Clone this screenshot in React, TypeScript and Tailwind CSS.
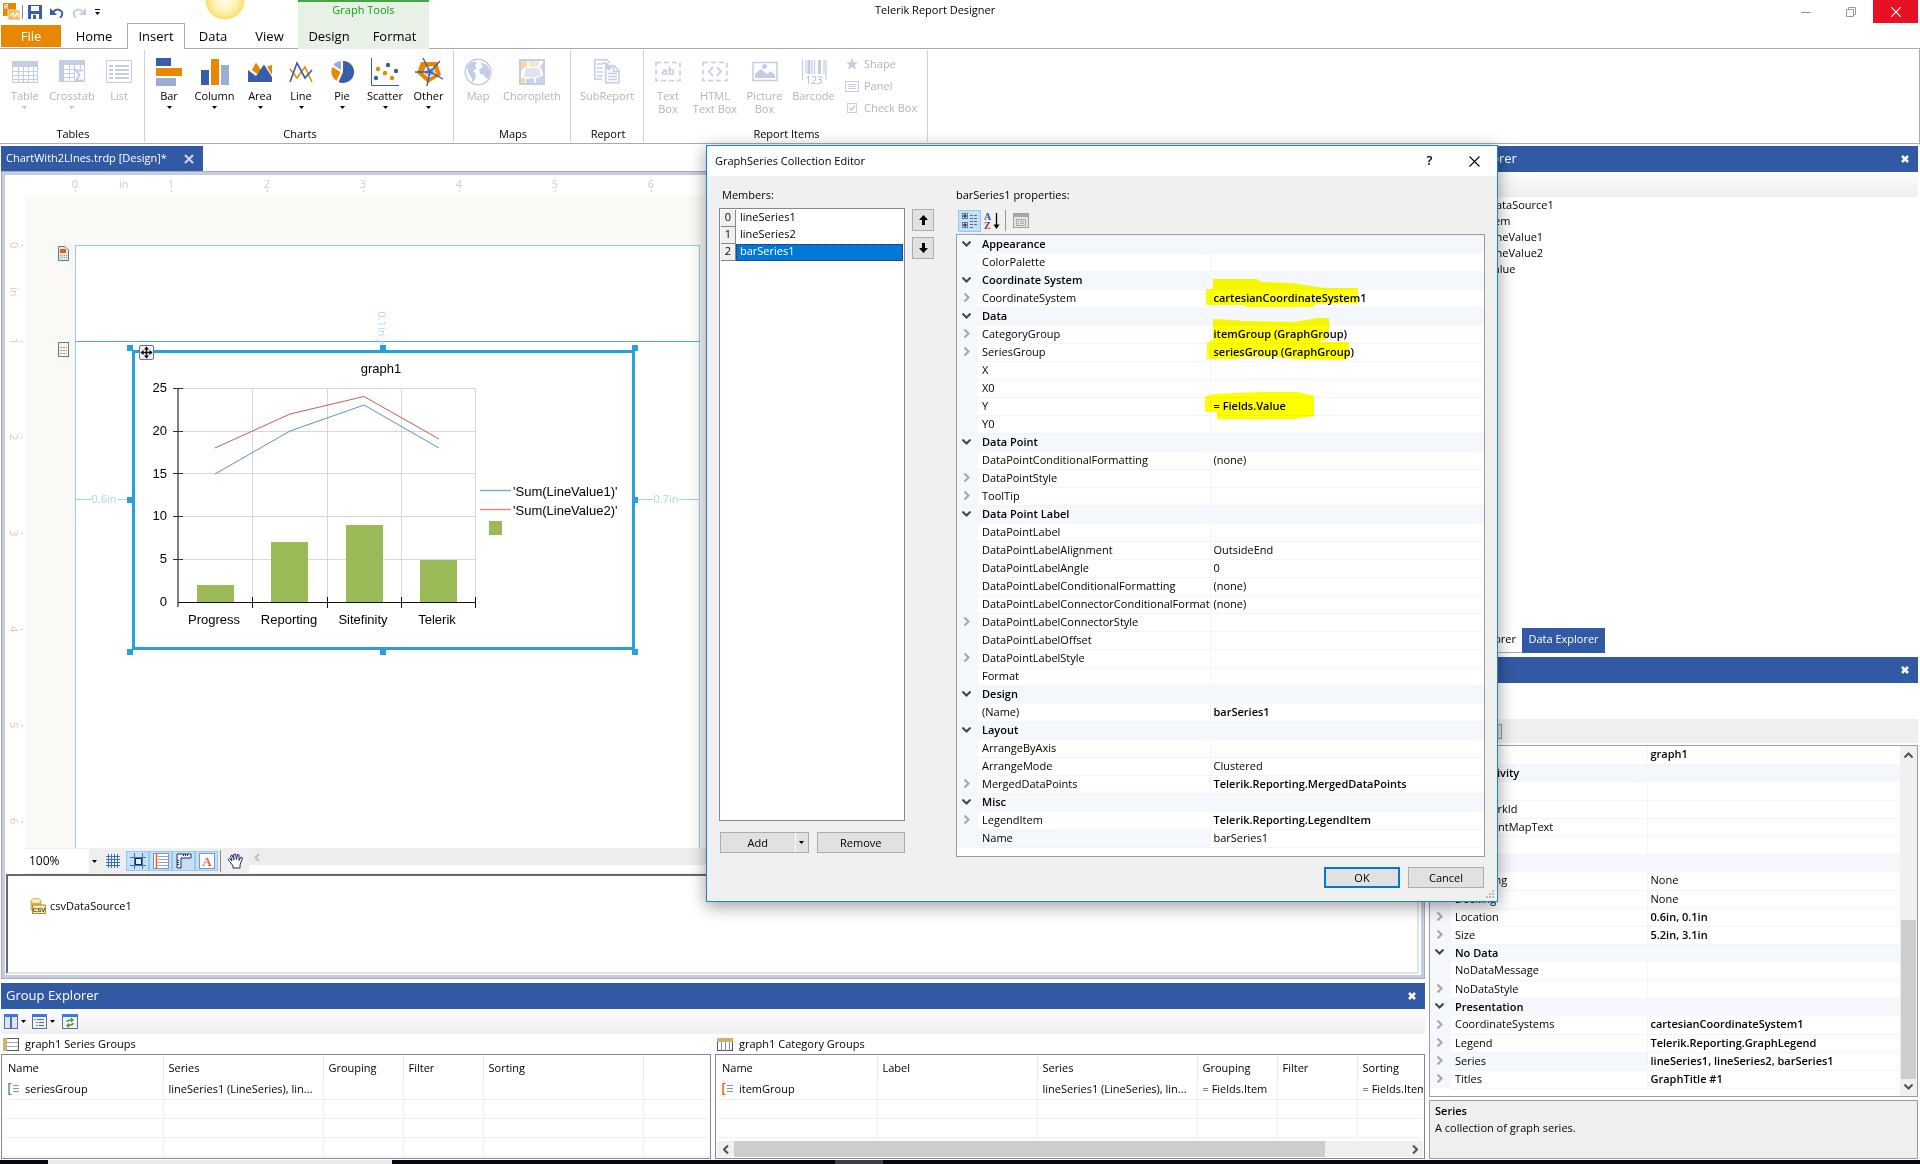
import React, { useState } from "react";
import type { ReactNode } from "react";

type IconProps = { w?: number; h?: number; children: ReactNode };

function Svg({ w = 26, h = 28, children }: IconProps) {
  return (
    <svg width={w} height={h} viewBox={`0 0 ${w} ${h}`} aria-hidden="true" className="shrink-0">
      {children}
    </svg>
  );
}

const BLUE = "#3a5dab";
const ORANGE = "#ea8700";
const PALE = "#9badd6";
const FADE = "#c3cde6";

/* ---------- ribbon icons ---------- */

const TableIcon = () => (
  <Svg>
    <rect x="0.5" y="3.5" width="25" height="21" fill="#fff" stroke={FADE} />
    <rect x="0" y="3" width="26" height="6" fill={FADE} />
    <path d="M0 13.5H26M0 17.5H26M0 21.5H26M6.5 9V25M11.5 9V25M16.5 9V25M21.5 9V25" stroke={FADE} />
  </Svg>
);
const CrosstabIcon = () => (
  <Svg>
    <rect x="0.5" y="2.5" width="25" height="21" fill="#fff" stroke={FADE} />
    <rect x="0" y="2" width="26" height="5" fill={FADE} />
    <rect x="0" y="2" width="5" height="22" fill={FADE} />
    <path d="M5 11.5H18M5 15.5H15M5 19.5H15M10.5 7V24M15.5 7V24M21.5 7V11" stroke={FADE} />
    <path d="M24 12.5H17L20.5 17L17 22.5H24.5" fill="none" stroke={FADE} strokeWidth="2" />
  </Svg>
);
const ListIcon = () => (
  <Svg>
    <rect x="0.5" y="2.5" width="25" height="22" fill="#fff" stroke={FADE} />
    <path d="M3 8H7M9 8H23M3 12H7M9 12H23M3 16H7M9 16H23M3 20H7M9 20H23" stroke={FADE} strokeWidth="2" />
  </Svg>
);
const BarIcon = () => (
  <Svg>
    <rect y="0" width="15" height="8" fill={BLUE} />
    <rect y="10" width="26" height="8" fill={ORANGE} />
    <rect y="20" width="20" height="8" fill={PALE} />
  </Svg>
);
const ColumnIcon = () => (
  <Svg w={28}>
    <rect x="0" y="12" width="8" height="15" fill={BLUE} />
    <rect x="10" y="1" width="8" height="26" fill={ORANGE} />
    <rect x="20" y="7" width="8" height="20" fill={PALE} />
  </Svg>
);
const AreaIcon = () => (
  <Svg w={24}>
    <path d="M4 12L8 4.5L13 12L9 16Z M19 8.5L24 7V17Z" fill={ORANGE} />
    <path d="M0 24V12L8 18L16 6.5L24 19V24Z" fill={BLUE} />
  </Svg>
);
const LineIcon = () => (
  <Svg w={24}>
    <path d="M1 11L8 20L16 9L23 24" fill="none" stroke={ORANGE} strokeWidth="1.6" />
    <path d="M1 24L8 5L16 20L23 12" fill="none" stroke={BLUE} strokeWidth="1.6" />
  </Svg>
);
const PieIcon = () => (
  <Svg w={24}>
    <path d="M13 3A11 11 0 1 1 8.500 24L13 14Z" fill={BLUE} />
    <path d="M11 3V12L3.500 7A10 10 0 0 1 11 3Z" fill={PALE} />
    <path d="M2.500 9L10.500 14L6.500 23A11 11 0 0 1 2.500 9Z" fill={ORANGE} />
  </Svg>
);
const ScatterIcon = () => (
  <Svg w={28}>
    <path d="M0.500 0V27.500H28" fill="none" stroke={BLUE} />
    <g fill={ORANGE}><circle cx="7" cy="11" r="2.200" /><circle cx="14" cy="15" r="2.200" /><circle cx="21" cy="20" r="2.200" /></g>
    <g fill={BLUE}><circle cx="17" cy="7" r="2.200" /><circle cx="25" cy="13" r="2.200" /><circle cx="5" cy="20" r="2.200" /></g>
  </Svg>
);
const OtherIcon = () => (
  <Svg w={28}>
    <path fillRule="evenodd" d="M6 4L22 4L26 17L13 25L2 15Z M11 9L8 15L14 20L21 16L18 8Z" fill={ORANGE} />
    <path d="M12 11L18 10L20 16L14 18L9 15Z" fill={PALE} />
    <path d="M8 0L15 14L25 3M0 14H15L28 21M15 14L12 28" fill="none" stroke={BLUE} strokeWidth="1.400" />
  </Svg>
);
const MapIcon = () => (
  <Svg w={28}>
    <circle cx="14" cy="14" r="12.800" fill="#fff" stroke={FADE} strokeWidth="1.600" />
    <path d="M3 8L8 4L13 4L11 8L13 10L9 13L12 16L11 21L9 25L7 19L4 14Z M16 4L23 7L26 13L25 19L22 21L20 17L16 16L15 11L19 9Z" fill={FADE} />
  </Svg>
);
const ChoroplethIcon = () => (
  <Svg>
    <rect x="1" y="2" width="24" height="24" fill="#fff" stroke={FADE} strokeWidth="2" />
    <path d="M2 3H8V8L2 13Z M2 20H6V25H2Z" fill="#fad7a5" />
    <path d="M10 3H21L18 9H10Z" fill="#fbe6c8" />
    <path d="M7 10H20L22 18L14 19H5Z" fill="#dfe4f2" />
    <path d="M7 21L15 20V25H7Z M17 20L24 18V25H17Z M21 8L24 5V15Z" fill="#cdd5ea" />
  </Svg>
);
const SubReportIcon = () => (
  <Svg>
    <path d="M8 21H0.800V1.800H13L16 5" fill="#fff" stroke={FADE} strokeWidth="1.500" />
    <path d="M3 6H9M3 10H9M3 14H9M3 18H9" stroke={FADE} strokeWidth="1.500" />
    <path d="M11.800 7.800H20L25 13V24.800H11.800Z" fill="#fff" stroke={FADE} strokeWidth="1.500" />
    <path d="M19.500 8V13.500H25M14 15.500H23M14 18.500H23M14 21.500H23" fill="none" stroke={FADE} strokeWidth="1.500" />
    <path d="M9 5Q15 5 15 11M12 8.500L15 11.500L17.500 8.500" fill="none" stroke={FADE} strokeWidth="1.800" />
  </Svg>
);
const TextBoxIcon = () => (
  <Svg>
    <rect x="1" y="4.500" width="24" height="18" fill="none" stroke={FADE} strokeWidth="1.500" strokeDasharray="5 3" />
    <text x="13" y="17" textAnchor="middle" fontSize="11" fontWeight="700" fill={FADE} fontFamily="Open Sans, sans-serif">ab</text>
  </Svg>
);
const HtmlBoxIcon = () => (
  <Svg>
    <rect x="1" y="4.500" width="24" height="18" fill="none" stroke={FADE} strokeWidth="1.500" strokeDasharray="5 3" />
    <path d="M11 9L7 13.500L11 18M15 9L19 13.500L15 18" fill="none" stroke={FADE} strokeWidth="1.800" />
  </Svg>
);
const PictureIcon = () => (
  <Svg>
    <rect x="1" y="4.500" width="24" height="18" fill="#fff" stroke={FADE} strokeWidth="1.500" />
    <path d="M3 20V16L9 11L15 16L19 13L23 17V20Z" fill={FADE} />
    <circle cx="12.500" cy="8.500" r="2.500" fill={FADE} />
  </Svg>
);
const BarcodeIcon = () => (
  <Svg>
    <path d="M1.500 2V22M25 2V22M5 2V16M11 2V16M13.500 2V16M23 2V16" stroke={FADE} strokeWidth="1.200" />
    <path d="M8 2V16M18.500 2V16" stroke={FADE} strokeWidth="3" />
    <text x="13" y="26" textAnchor="middle" fontSize="10" fill="#aab8db" fontFamily="Open Sans, sans-serif">123</text>
  </Svg>
);
const ShapeIcon = () => (
  <Svg w={14} h={14}>
    <path d="M7 1L8.700 5.300H13L9.600 8L11 12.800L7 10L3 12.800L4.400 8L1 5.300H5.300Z" fill={FADE} />
  </Svg>
);
const PanelIcon = () => (
  <Svg w={14} h={14}>
    <rect x="0.500" y="2.500" width="13" height="10" fill="#fff" stroke={FADE} />
    <path d="M3 5.500H11M3 7.500H11M3 9.500H11" stroke={FADE} />
  </Svg>
);
const CheckIcon = () => (
  <Svg w={14} h={14}>
    <rect x="2.500" y="2.500" width="9" height="9" fill="#fff" stroke={FADE} />
    <path d="M4.500 7L6.500 9L10 4.500" fill="none" stroke={FADE} strokeWidth="1.500" />
  </Svg>
);

const Caret = ({ faded = false }: { faded?: boolean }) => (
  <svg width="5" height="3" viewBox="0 0 5 3" aria-hidden="true" className="shrink-0">
    <path d="M0 0H5L2.500 3Z" fill={faded ? "#c0c0c0" : "#000"} />
  </svg>
);

/* ---------- ribbon ---------- */

function RibbonButton({ icon, label, className, disabled = false, caret = false }: {
  icon: ReactNode; label: string; className: string; disabled?: boolean; caret?: boolean;
}) {
  return (
    <button
      disabled={disabled}
      className={`flex h-[66px] flex-col items-center whitespace-pre-line text-center text-[11px] leading-[13px] ${disabled ? "text-[#b4b4b4]" : "text-black"} ${className}`}
    >
      {icon}
      <span className="mt-[3px]">{label}</span>
      {caret && <span className="mt-1"><Caret faded={disabled} /></span>}
    </button>
  );
}

function RibbonGroup({ title, children, className }: { title: string; children: ReactNode; className: string }) {
  return (
    <section className={`flex flex-col justify-between border-r border-[#d2d2d2] ${className}`}>
      <div className="flex px-1 pt-2">{children}</div>
      <h2 className="pl-0.5 text-center text-[11px] leading-4">{title}</h2>
    </section>
  );
}

function Ribbon() {
  return (
    <div className="flex h-[95px] shrink-0 border-r border-b border-[#ababab] bg-white pt-px pb-px">
      <RibbonGroup title="Tables" className="w-[145px]">
        <RibbonButton icon={<TableIcon />} label="Table" className="w-[42px]" disabled caret />
        <RibbonButton icon={<CrosstabIcon />} label="Crosstab" className="w-[53px]" disabled caret />
        <RibbonButton icon={<ListIcon />} label="List" className="w-[42px]" disabled />
      </RibbonGroup>
      <RibbonGroup title="Charts" className="w-[309px]">
        <RibbonButton icon={<BarIcon />} label="Bar" className="w-10" caret />
        <RibbonButton icon={<ColumnIcon />} label="Column" className="w-[51px]" caret />
        <RibbonButton icon={<AreaIcon />} label="Area" className="w-10" caret />
        <RibbonButton icon={<LineIcon />} label="Line" className="w-[42px]" caret />
        <RibbonButton icon={<PieIcon />} label="Pie" className="w-10" caret />
        <RibbonButton icon={<ScatterIcon />} label="Scatter" className="w-[46px]" caret />
        <RibbonButton icon={<OtherIcon />} label="Other" className="w-[41px]" caret />
      </RibbonGroup>
      <RibbonGroup title="Maps" className="w-[117px]">
        <RibbonButton icon={<MapIcon />} label="Map" className="w-10" disabled />
        <RibbonButton icon={<ChoroplethIcon />} label="Choropleth" className="w-[68px]" disabled />
      </RibbonGroup>
      <RibbonGroup title="Report" className="w-[73px]">
        <RibbonButton icon={<SubReportIcon />} label="SubReport" className="w-16" disabled />
      </RibbonGroup>
      <RibbonGroup title="Report Items" className="w-[284px]">
        <RibbonButton icon={<TextBoxIcon />} label={"Text\nBox"} className="w-10" disabled />
        <RibbonButton icon={<HtmlBoxIcon />} label={"HTML\nText Box"} className="w-[54px]" disabled />
        <RibbonButton icon={<PictureIcon />} label={"Picture\nBox"} className="w-[45px]" disabled />
        <RibbonButton icon={<BarcodeIcon />} label="Barcode" className="w-[53px]" disabled />
        <div className="-mt-px flex flex-col gap-2 pl-[5px] text-[11px] leading-[14px] text-[#b4b4b4]">
          <button disabled className="flex items-center gap-[5px]"><ShapeIcon />Shape</button>
          <button disabled className="flex items-center gap-[5px]"><PanelIcon />Panel</button>
          <button disabled className="flex items-center gap-[5px]"><CheckIcon />Check Box</button>
        </div>
      </RibbonGroup>
    </div>
  );
}

function TitleArea() {
  const plain = "h-[26px] border-b border-[#ababab] text-[13px] leading-[26px]";
  return (
    <header className="flex h-[49px] shrink-0 bg-white">
      <div className="relative flex w-[298px] flex-col">
        <div className="flex h-[23px] items-center pl-[3px]">
          <Svg w={17} h={17}>
            <rect x="0" y="0" width="13" height="13" fill={ORANGE} />
            <path d="M2 6V1.500H4.500V3.500H2M3 3.500L5 6" fill="none" stroke="#fff" />
            <rect x="5" y="7" width="12" height="10" fill="#f7b45c" stroke="#fff" strokeWidth="0.700" />
            <path d="M7 13L10 10L11 14L15 10M12 10H15V14" fill="none" stroke="#fff" strokeWidth="1.200" />
          </Svg>
          <span className="ml-0.5 h-[14px] w-px bg-[#8a8a8a]" />
          <button aria-label="Save" className="ml-[5px]">
            <Svg w={14} h={14}>
              <path d="M0 0H14V14H0Z" fill={BLUE} />
              <rect x="3" y="1" width="8" height="5" fill="#fff" />
              <rect x="3" y="9" width="8" height="5" fill="#fff" />
              <rect x="5" y="10" width="3" height="4" fill={BLUE} />
            </Svg>
          </button>
          <button aria-label="Undo" className="ml-2">
            <Svg w={14} h={12}>
              <path d="M3 6Q8 1 12 6Q13 9 10 12" fill="none" stroke={BLUE} strokeWidth="2" />
              <path d="M0 2V9H7Z" fill={BLUE} />
            </Svg>
          </button>
          <button aria-label="Redo" className="ml-2" disabled>
            <Svg w={14} h={12}>
              <path d="M11 6Q6 1 2 6Q1 9 4 12" fill="none" stroke={FADE} strokeWidth="2" />
              <path d="M14 2V9H7Z" fill={FADE} />
            </Svg>
          </button>
          <button aria-label="Customize toolbar" className="ml-[9px]">
            <Svg w={5} h={6}>
              <path d="M0 0.500H5" stroke="#000" />
              <path d="M0 3H5L2.500 6Z" />
            </Svg>
          </button>
          <svg width="40" height="20" viewBox="0 0 40 20" aria-hidden="true" className="absolute top-0 left-[205px]">
            <defs>
              <radialGradient id="sun"><stop offset="0" stopColor="#fffdf0" /><stop offset="0.600" stopColor="#fff3b4" /><stop offset="1" stopColor="#f9dc68" /></radialGradient>
            </defs>
            <circle cx="20" cy="0" r="19.500" fill="url(#sun)" />
          </svg>
        </div>
        <nav className="flex" aria-label="Ribbon tabs">
          <div className="w-[61px] border-b border-[#ababab] pt-0.5 pl-px">
            <button className="block h-[22px] w-full bg-[#ea8700] text-[13px] leading-[22px] text-white">File</button>
          </div>
          <button className={`${plain} w-[66px]`}>Home</button>
          <button className="h-[26px] w-[58px] border border-b-0 border-[#ababab] text-[13px] leading-[25px]">Insert</button>
          <button className={`${plain} w-[56px]`}>Data</button>
          <button className={`${plain} w-[57px]`}>View</button>
        </nav>
      </div>
      <div className="w-[131px] border-t-2 border-[#47a447] bg-[#e7f1e6]">
        <div className="h-[21px] text-center text-[11px] leading-[15px] text-[#12a012]">Graph Tools</div>
        <div className="flex text-[13px] leading-[26px]">
          <button className="w-[62px]">Design</button>
          <button className="w-[69px]">Format</button>
        </div>
      </div>
      <div className="flex flex-1 items-start justify-between border-b border-[#ababab]">
        <h1 className="pl-[446px] text-[11px] leading-[20px]">Telerik Report Designer</h1>
        <div className="flex pr-0.5">
          <button aria-label="Minimize" className="flex h-[23px] w-[45px] items-center justify-center">
            <Svg w={10} h={10}><path d="M0 5.500H10" stroke="#999" /></Svg>
          </button>
          <button aria-label="Restore" className="flex h-[23px] w-[45px] items-center justify-center">
            <Svg w={10} h={10}><path d="M0.500 2.500H7.500V9.500H0.500ZM2.500 2.500V0.500H9.500V7.500H7.500" fill="none" stroke="#999" /></Svg>
          </button>
          <button aria-label="Close" className="flex h-[23px] w-[45px] items-center justify-center bg-[#e81123]">
            <Svg w={10} h={10}><path d="M0 0L10 10M10 0L0 10" stroke="#fff" strokeWidth="1.200" /></Svg>
          </button>
        </div>
      </div>
    </header>
  );
}

/* ---------- property grid ---------- */

type Prop = { name: string; value?: string; kind?: "cat" | "exp"; bold?: boolean; selected?: boolean };

function PropertyTable({ rows, nameWidth, label }: { rows: Prop[]; nameWidth: string; label: string }) {
  return (
    <table aria-label={label} className="w-full table-fixed border-collapse text-[11px] leading-[16px]">
      <colgroup>
        <col className="w-[21px]" />
        <col className={nameWidth} />
        <col />
      </colgroup>
      <tbody>
        {rows.map((r, i) => (
          <tr key={i} className="h-[18px]">
            <td className="bg-[#f4f7fc] p-0 align-top">
              {r.kind && (
                <button aria-label={`Toggle ${r.name}`} className="flex h-[16px] w-[19px] items-center justify-center">
                  {r.kind === "cat" ? (
                    <Svg w={9} h={6}><path d="M0.500 0.500L4.500 4.500L8.500 0.500" fill="none" stroke="#444" strokeWidth="2" /></Svg>
                  ) : (
                    <Svg w={6} h={9}><path d="M0.500 0.500L4.500 4.500L0.500 8.500" fill="none" stroke="#a6a6a6" strokeWidth="2" /></Svg>
                  )}
                </button>
              )}
            </td>
            {r.kind === "cat" ? (
              <th colSpan={2} scope="rowgroup" className="truncate border-t border-[#eeeeee] bg-[#f4f7fc] p-0 pl-1 text-left align-top font-semibold">{r.name}</th>
            ) : (
              <>
                <td className={`overflow-hidden border-b border-[#f1f4fa] p-0 pl-1 align-top whitespace-nowrap ${r.selected ? "bg-[#f4f7fc]" : "bg-white"}`}>{r.name}</td>
                <td className={`truncate border-b border-l border-[#f1f4fa] bg-white p-0 pl-[3px] align-top ${r.bold ? "font-semibold" : ""}`}>{r.value}</td>
              </>
            )}
          </tr>
        ))}
      </tbody>
    </table>
  );
}

const cat = (name: string): Prop => ({ name, kind: "cat" });

const seriesProps: Prop[] = [
  cat("Appearance"),
  { name: "ColorPalette" },
  cat("Coordinate System"),
  { name: "CoordinateSystem", kind: "exp", value: "cartesianCoordinateSystem1", bold: true },
  cat("Data"),
  { name: "CategoryGroup", kind: "exp", value: "itemGroup (GraphGroup)", bold: true },
  { name: "SeriesGroup", kind: "exp", value: "seriesGroup (GraphGroup)", bold: true },
  { name: "X" },
  { name: "X0" },
  { name: "Y", value: "= Fields.Value", bold: true },
  { name: "Y0" },
  cat("Data Point"),
  { name: "DataPointConditionalFormatting", value: "(none)" },
  { name: "DataPointStyle", kind: "exp" },
  { name: "ToolTip", kind: "exp" },
  cat("Data Point Label"),
  { name: "DataPointLabel" },
  { name: "DataPointLabelAlignment", value: "OutsideEnd" },
  { name: "DataPointLabelAngle", value: "0" },
  { name: "DataPointLabelConditionalFormatting", value: "(none)" },
  { name: "DataPointLabelConnectorConditionalFormatting", value: "(none)" },
  { name: "DataPointLabelConnectorStyle", kind: "exp" },
  { name: "DataPointLabelOffset" },
  { name: "DataPointLabelStyle", kind: "exp" },
  { name: "Format" },
  cat("Design"),
  { name: "(Name)", value: "barSeries1", bold: true },
  cat("Layout"),
  { name: "ArrangeByAxis" },
  { name: "ArrangeMode", value: "Clustered" },
  { name: "MergedDataPoints", kind: "exp", value: "Telerik.Reporting.MergedDataPoints", bold: true },
  cat("Misc"),
  { name: "LegendItem", kind: "exp", value: "Telerik.Reporting.LegendItem", bold: true },
  { name: "Name", value: "barSeries1", selected: true },
];

const graphProps: Prop[] = [
  { name: "(Name)", value: "graph1", bold: true },
  cat("Interactivity"),
  { name: "Action" },
  { name: "BookmarkId" },
  { name: "DocumentMapText" },
  { name: "ToolTip" },
  cat("Layout"),
  { name: "Anchoring", value: "None" },
  { name: "Docking", value: "None" },
  { name: "Location", kind: "exp", value: "0.6in, 0.1in", bold: true },
  { name: "Size", kind: "exp", value: "5.2in, 3.1in", bold: true },
  cat("No Data"),
  { name: "NoDataMessage" },
  { name: "NoDataStyle", kind: "exp" },
  cat("Presentation"),
  { name: "CoordinateSystems", kind: "exp", value: "cartesianCoordinateSystem1", bold: true },
  { name: "Legend", kind: "exp", value: "Telerik.Reporting.GraphLegend", bold: true },
  { name: "Series", kind: "exp", value: "lineSeries1, lineSeries2, barSeries1", bold: true, selected: true },
  { name: "Titles", kind: "exp", value: "GraphTitle #1", bold: true },
];

/* ---------- panels ---------- */

function PanelHeader({ title }: { title: string }) {
  return (
    <div className="flex h-[26px] shrink-0 items-center justify-between bg-[#3259a3] pr-[9px] pl-[5px] text-[13px] text-white">
      <h2>{title}</h2>
      <button aria-label={`Close ${title}`}>
        <Svg w={8} h={8}><path d="M1 1L7 7M7 1L1 7" stroke="#fff" strokeWidth="2.500" /></Svg>
      </button>
    </div>
  );
}

/* Graph item on the design surface, drawn in surface coordinates. */
const bars = [
  { x: 197, top: 585, label: "Progress", cx: 214 },
  { x: 271, top: 542, label: "Reporting", cx: 289 },
  { x: 346, top: 525, label: "Sitefinity", cx: 363 },
  { x: 420, top: 560, label: "Telerik", cx: 437 },
];
const handles = [[127, 345], [380, 345], [632, 345], [127, 497], [632, 497], [127, 649], [380, 649], [632, 649]];

function DesignSurface() {
  return (
    <svg className="block h-full w-full bg-[#faf9f5]" role="img" aria-label="Report design surface">
      <g transform="translate(-25 -195)">
        <rect x="75.500" y="245.500" width="624" height="2000" fill="#fff" stroke="#8fcdea" />
        <path d="M75 341.500H700" stroke="#4fb0e0" />
        <path d="M75 499.500H91M118 499.500H127M638 499.500H653M679 499.500H700M382.500 341V346" stroke="#9bd2ee" />
        <g fill="#a8d8f0" fontSize="11" fontFamily="Open Sans, sans-serif" textAnchor="middle">
          <text x="104" y="503">0.6in</text>
          <text x="666" y="503">0.7in</text>
          <text transform="translate(378 324) rotate(90)">0.1in</text>
        </g>
        <rect x="133.500" y="351.500" width="500" height="297" fill="#fff" stroke="#28a0dc" strokeWidth="3" />
        {handles.map(([x, y]) => <rect key={`${x}-${y}`} x={x} y={y} width="6" height="6" fill="#28a0dc" />)}
        <g stroke="#d8d8d8">
          <path d="M178 388.500H476M178 431.500H476M178 473.500H476M178 516.500H476M178 559.500H476M252.500 388V602M327.500 388V602M401.500 388V602M475.500 388V602" />
        </g>
        {bars.map((b) => <rect key={b.label} x={b.x} y={b.top} width="37" height={602 - b.top} fill="#9bbb59" />)}
        <polyline points="215,474 290,431 364,405 439,448" fill="none" stroke="#5f8fcb" />
        <polyline points="215,448 290,414 364,396.500 439,439" fill="none" stroke="#c95a57" />
        <path d="M178 388V607" stroke="#555" strokeWidth="1.500" />
        <path d="M173 388.500H183M173 431.500H183M173 473.500H183M173 516.500H183M173 559.500H183" stroke="#333" />
        <path d="M178 602.500H476M252.500 597V608M327.500 597V608M401.500 597V608M475.500 597V608" stroke="#111" />
        <g fontFamily="Liberation Sans, sans-serif" fontSize="13" textAnchor="end">
          <text x="167" y="392">25</text><text x="167" y="435">20</text><text x="167" y="478">15</text>
          <text x="167" y="520">10</text><text x="167" y="563">5</text><text x="167" y="606">0</text>
        </g>
        <g fontFamily="Liberation Sans, sans-serif" fontSize="13" textAnchor="middle">
          <text x="381" y="373">graph1</text>
          {bars.map((b) => <text key={b.label} x={b.cx} y="624">{b.label}</text>)}
        </g>
        <path d="M480 490.500H511" stroke="#86a9d6" strokeWidth="1.500" />
        <path d="M480 509.500H511" stroke="#d88c8a" strokeWidth="1.500" />
        <rect x="489" y="521" width="13" height="14" fill="#9bbb59" />
        <g fontFamily="Liberation Sans, sans-serif" fontSize="13">
          <text x="513" y="496">'Sum(LineValue1)'</text>
          <text x="513" y="515">'Sum(LineValue2)'</text>
        </g>
        <rect x="139.500" y="345.500" width="14" height="14" rx="1.500" fill="#eef1fb" stroke="#6f7285" />
        <path d="M146.500 348V358M141.500 352.500H151.500" stroke="#111" strokeWidth="1.400" />
        <path d="M144 349.500L146.500 346.500L149 349.500ZM144 355.500L146.500 358.500L149 355.500ZM143.500 350L140.500 352.500L143.500 355ZM149.500 350L152.500 352.500L149.500 355Z" />
        <g>
          <path d="M58.500 246.500H65L68.500 250V260.500H58.500Z" fill="#dfe7ea" stroke="#52808f" />
          <rect x="60" y="249" width="6" height="4" fill="#f25a00" />
          <path d="M60 255.500H67M60 257.500H67" stroke="#8aa4ae" strokeDasharray="1 1" />
          <rect x="58.500" y="342.500" width="10" height="14" fill="#fbf7f0" stroke="#52808f" />
          <path d="M60 347.500H67M60 350.500H67M60 353.500H67" stroke="#e0843c" strokeDasharray="2 1" />
        </g>
      </g>
    </svg>
  );
}

function DesignerFrame() {
  const tool = "flex h-5 w-[23px] items-center justify-center border border-[#90c8f6] bg-[#c5dff5]";
  return (
    <div className="flex min-h-0 flex-1 flex-col border border-[#ababab] bg-[#c3cde3] p-[3px]">
      <div className="flex min-h-0 flex-1 flex-col bg-white">
        <div className="flex h-5 shrink-0 overflow-hidden pl-[22px] text-[11px] text-[#cfccc4]">
          {[0, 1, 2, 3, 4, 5, 6].map((n) => (
            <div key={n} className="relative flex w-24 shrink-0 flex-col items-center pt-0.5 leading-[13px]">
              {n}
              <span className="h-0.5 w-px bg-[#cfccc4]" />
              {n === 0 && <span className="absolute top-0.5 left-[92px]">in</span>}
            </div>
          ))}
        </div>
        <div className="flex min-h-0 flex-1">
          <div className="flex w-5 shrink-0 flex-col overflow-hidden pt-0.5 text-[11px] text-[#cfccc4]">
            {[0, 1, 2, 3, 4, 5, 6].map((n) => (
              <div key={n} className="relative flex h-24 shrink-0 items-center pl-0.5 leading-[14px]">
                <span className="[writing-mode:vertical-rl]">{n}</span>
                <span className="h-px w-0.5 bg-[#cfccc4]" />
                {n === 0 && <span className="absolute top-[90px] left-0.5 [writing-mode:vertical-rl]">in</span>}
              </div>
            ))}
          </div>
          <div className="min-w-0 flex-1"><DesignSurface /></div>
        </div>
        <div className="flex h-[26px] shrink-0 items-center bg-[#efefef]">
          <span className="h-full w-5 bg-white" />
          <div className="relative flex h-[24px] w-[75px] items-center bg-white">
            <select aria-label="Zoom" className="h-full w-full appearance-none bg-transparent pl-1 text-[12px]"><option>100%</option></select>
            <span className="pointer-events-none absolute right-0 flex h-full w-[11px] items-center justify-center bg-[#efefef]"><Caret /></span>
          </div>
          <button aria-label="Show grid" className="mx-[5px] flex w-[16px] justify-center">
            <Svg w={16} h={16}><path d="M1 3.500H15M1 6.500H15M1 9.500H15M1 12.500H15M3.500 1V15M6.500 1V15M9.500 1V15M12.500 1V15" stroke="#3b6fc4" /></Svg>
          </button>
          <button aria-label="Snap to grid" className={tool}>
            <Svg w={16} h={16}><path d="M0 4.500H16M0 12.500H16M4.500 0V16M12.500 0V16" stroke="#3b6fc4" /><rect x="5.500" y="5.500" width="6" height="6" fill="#e4e9f2" stroke="#222a4a" /></Svg>
          </button>
          <button aria-label="Dimensions" className={tool}>
            <Svg w={16} h={16}><rect x="0.500" y="0.500" width="15" height="15" fill="#fff" stroke="#7b93c0" /><path d="M5 3.500H15M5 6.500H15M5 9.500H15M5 12.500H15" stroke="#8fa3c8" /><path d="M3.500 1V15" stroke="#ea5b20" strokeWidth="1.500" /></Svg>
          </button>
          <button aria-label="Rulers" className={tool}>
            <Svg w={16} h={16}><path d="M1 1H15V5H5V15H1Z" fill="#eef1fb" stroke="#2a3358" /><path d="M7.500 1V3M9.500 1V3M11.500 1V3M1 7.500H3M1 9.500H3M1 11.500H3" stroke="#2a3358" /></Svg>
          </button>
          <button aria-label="Text bounds" className={tool}>
            <Svg w={16} h={16}><rect x="0.500" y="0.500" width="15" height="15" fill="#fff" stroke="#7b93c0" /><text x="8" y="13" textAnchor="middle" fontSize="13" fontWeight="700" fill="#f0595b" fontFamily="Liberation Serif, serif">A</text></Svg>
          </button>
          <span className="ml-[2px] h-[22px] w-px bg-[#888]" />
          <button aria-label="Pan" className="mx-[6px]">
            <Svg w={16} h={16}><path d="M4 10L1 6.500L2.500 5.500L5 8L3.500 3L5 2L7 7L6.500 1.500L8.500 1L9.500 6.500L10.500 1.500L12 2L12 7.500L14 4L15.500 5L13 12V15H6V13Z" fill="#fff" stroke="#222a66" /></Svg>
          </button>
          <div className="flex h-[24px] min-w-0 flex-1 flex-col bg-white">
            <div className="flex h-[16px] items-center bg-[#ededed] pl-[5px]">
              <Svg w={6} h={9}><path d="M5 1L1.500 4.500L5 8" fill="none" stroke="#bfbfbf" strokeWidth="1.800" /></Svg>
            </div>
          </div>
        </div>
        <div className="mr-0.5 mb-px ml-px flex h-[100px] shrink-0 items-start border-2 border-r-[#e3e3e3] border-b-[#e3e3e3] border-l-[#696969] border-t-[#696969] bg-white pt-[22px] pl-[22px]">
          <div className="flex items-center gap-1 text-[11px] leading-4">
            <Svg w={16} h={16}>
              <path d="M1 3V12H11V3Z" fill="#eec85c" stroke="#b58a24" strokeWidth="0.600" />
              <ellipse cx="6" cy="3" rx="5" ry="2.500" fill="#fbeeb5" stroke="#b58a24" strokeWidth="0.600" />
              <rect x="2.500" y="7" width="13" height="8.500" fill="#f3e7ae" stroke="#8c7430" strokeWidth="0.800" />
              <text x="9" y="13.500" textAnchor="middle" fontSize="6" fontWeight="700" fill="#4d3d0e" fontFamily="Liberation Sans, sans-serif">CSV</text>
            </Svg>
            csvDataSource1
          </div>
        </div>
      </div>
    </div>
  );
}

function GroupTable({ title, icon, columns, cells, rowIcon, scroll = false, emptyRows }: {
  title: string; icon: ReactNode; columns: [string, string][]; cells: string[]; rowIcon: string; scroll?: boolean; emptyRows: number;
}) {
  return (
    <section className="flex min-w-0 flex-1 flex-col">
      <h3 className="flex h-5 items-center gap-1.5 pl-0.5 text-[11px]">{icon}{title}</h3>
      <div className="flex h-[105px] flex-col justify-between overflow-hidden border border-[#828790] bg-white p-px">
        <div className="overflow-hidden">
          <table className="w-[960px] table-fixed border-collapse text-[11px]" aria-label={title}>
            <colgroup>
              {columns.map(([c, w]) => <col key={c} className={w} />)}
              <col />
            </colgroup>
            <thead>
              <tr className="h-6">
                {columns.map(([c]) => <th key={c} scope="col" className="border-r border-[#e5e5e5] p-0 pl-[5px] text-left font-normal">{c}</th>)}
                <th />
              </tr>
            </thead>
            <tbody>
              <tr className="h-[19px]">
                {columns.map(([c], i) => (
                  <td key={c} className="overflow-hidden border-r border-b border-[#f0f0f0] p-0 pl-[5px] whitespace-nowrap">
                    {i === 0 ? (
                      <span className="flex items-center gap-[5px]">
                        <Svg w={12} h={12}>
                          <path d="M3.500 0.500H1V11.500H3.500" fill="none" stroke={rowIcon} strokeWidth="1.500" />
                          <path d="M5 2.500H11M5 5.500H11M5 8.500H11" stroke="#7a9aa8" />
                        </Svg>
                        {cells[i]}
                      </span>
                    ) : cells[i]}
                  </td>
                ))}
                <td className="border-b border-[#f0f0f0]" />
              </tr>
              {Array.from({ length: emptyRows }, (_, r) => (
                <tr key={r} className="h-[19px]">
                  {columns.map(([c]) => <td key={c} className="border-r border-b border-[#f0f0f0]" />)}
                  <td className="border-b border-[#f0f0f0]" />
                </tr>
              ))}
            </tbody>
          </table>
        </div>
        {scroll && (
          <div className="flex h-[16px] shrink-0 items-center bg-[#f0f0f0]" aria-hidden="true">
            <span className="flex w-[17px] justify-center"><Svg w={6} h={9}><path d="M5 0.500L1 4.500L5 8.500" fill="none" stroke="#505050" strokeWidth="2" /></Svg></span>
            <span className="flex h-full flex-1"><span className="h-full w-[88%] bg-[#cdcdcd]" /></span>
            <span className="flex w-[17px] justify-center"><Svg w={6} h={9}><path d="M1 0.500L5 4.500L1 8.500" fill="none" stroke="#505050" strokeWidth="2" /></Svg></span>
          </div>
        )}
      </div>
    </section>
  );
}

function GroupExplorer() {
  return (
    <section className="mt-1 shrink-0">
      <PanelHeader title="Group Explorer" />
      <div className="flex h-[25px] items-center rounded-b bg-gradient-to-b from-[#fcfcfc] to-[#efefef] pl-[3px]">
        <button aria-label="Group layout" className="flex items-center gap-[3px]">
          <Svg w={14} h={15}><rect x="0.500" y="0.500" width="13" height="14" fill="#dbe6fa" stroke="#5b6e94" /><rect width="14" height="3" fill="#3d7ae0" /><path d="M7 2V15" stroke="#5b6e94" strokeWidth="2" /></Svg>
          <Caret />
        </button>
        <button aria-label="View mode" className="ml-[6px] flex items-center gap-[3px]">
          <Svg w={15} h={15}><rect x="0.500" y="0.500" width="14" height="14" fill="#eef3fb" stroke="#5b6e94" /><rect width="15" height="3" fill="#3d7ae0" /><path d="M5 5.500H12M7 8.500H12M7 11.500H12" stroke="#666" /><path d="M2 5.500H4M4 8.500H6M4 11.500H6" stroke="#6a3" /></Svg>
          <Caret />
        </button>
        <button aria-label="Refresh" className="ml-[7px]">
          <Svg w={16} h={15}><rect x="0.500" y="0.500" width="15" height="14" fill="#eef3fb" stroke="#5b6e94" /><rect width="16" height="3" fill="#3d7ae0" /><path d="M5 8Q5 6 10 6M11 9Q11 11 6 11.500" fill="none" stroke="#4c9a12" strokeWidth="1.600" /><path d="M9 3.500L12 6L9 8.500ZM7 9L4 11.500L7 14Z" fill="#4c9a12" /></Svg>
        </button>
      </div>
      <div className="flex gap-1">
        <GroupTable
          title="graph1 Series Groups"
          icon={<Svg w={16} h={13}><rect x="0.500" y="0.500" width="15" height="12" fill="#fff" stroke="#556" /><rect x="0" y="0" width="4" height="13" fill="#cdb46a" /><path d="M4 4.500H15M4 8.500H15" stroke="#9aa7c4" /></Svg>}
          columns={[["Name", "w-[160px]"], ["Series", "w-[160px]"], ["Grouping", "w-[80px]"], ["Filter", "w-[80px]"], ["Sorting", "w-[160px]"]]}
          cells={["seriesGroup", "lineSeries1 (LineSeries), lin...", "", "", ""]}
          rowIcon="#5d8fa0"
          emptyRows={3}
        />
        <GroupTable
          title="graph1 Category Groups"
          icon={<Svg w={16} h={13}><rect x="0.500" y="0.500" width="15" height="12" fill="#fff" stroke="#556" /><rect x="0" y="0" width="16" height="4" fill="#cdb46a" /><path d="M4.500 4V13M8.500 4V13M12.500 4V13" stroke="#7a8ab0" /></Svg>}
          columns={[["Name", "w-[160px]"], ["Label", "w-[160px]"], ["Series", "w-[160px]"], ["Grouping", "w-[80px]"], ["Filter", "w-[80px]"], ["Sorting", "w-[160px]"]]}
          cells={["itemGroup", "", "lineSeries1 (LineSeries), lin...", "= Fields.Item", "", "= Fields.Item"]}
          rowIcon="#f06414"
          scroll
          emptyRows={3}
        />
      </div>
    </section>
  );
}

function RightColumn() {
  return (
    <aside className="mr-0.5 ml-1 flex w-[489px] shrink-0 flex-col pt-0.5 pb-px">
      <section className="flex min-h-0 flex-1 flex-col">
        <PanelHeader title="Data Explorer" />
        <div className="h-[25px] shrink-0 rounded-b bg-gradient-to-b from-[#fcfcfc] to-[#efefef]" />
        <ul className="flex-1 pl-[43px] text-[11px] leading-4">
          <li>csvDataSource1
            <ul className="pl-[15px]">
              <li>Item</li><li>LineValue1</li><li>LineValue2</li><li>Value</li>
            </ul>
          </li>
        </ul>
        <div className="flex h-[25px] shrink-0 text-[11px] leading-[21px]">
          <button className="flex w-[93px] justify-end border-b border-[#ababab] pr-[6px]">Report Explorer</button>
          <button className="flex w-[83px] justify-center bg-[#3259a3] text-white">Data Explorer</button>
        </div>
      </section>
      <section className="mt-1 flex shrink-0 flex-col">
        <PanelHeader title="Properties" />
        <div className="h-9" />
        <div className="mb-0.5 flex h-6 items-center bg-[#efefef] pl-[58px]">
          <Svg w={15} h={15}><rect x="0.500" y="0.500" width="14" height="14" fill="#e4e4e4" stroke="#999" /><path d="M4 4H11V11H4Z" fill="none" stroke="#bbb" /></Svg>
        </div>
        <div className="flex h-[352px] border border-[#9c9c9c]">
          <div className="min-w-0 flex-1"><PropertyTable rows={graphProps} nameWidth="w-[196px]" label="Graph properties" /></div>
          <div className="flex w-[17px] flex-col items-center bg-[#f0f0f0] py-1.5 pr-px" aria-hidden="true">
            <Svg w={9} h={6}><path d="M0.500 5.500L4.500 1.500L8.500 5.500" fill="none" stroke="#505050" strokeWidth="2" /></Svg>
            <span className="mt-auto mb-[5px] h-[159px] w-[15px] bg-[#cdcdcd]" />
            <Svg w={9} h={6}><path d="M0.500 0.500L4.500 4.500L8.500 0.500" fill="none" stroke="#505050" strokeWidth="2" /></Svg>
          </div>
        </div>
        <div className="mt-[3px] h-[59px] border border-[#9c9c9c] bg-[#efefef] pt-px pl-[5px] text-[11px] leading-[17px]">
          <h3 className="font-semibold">Series</h3>
          <p>A collection of graph series.</p>
        </div>
      </section>
    </aside>
  );
}

/* ---------- dialog ---------- */

function ArrowButton({ dir }: { dir: "up" | "down" }) {
  return (
    <button aria-label={`Move ${dir}`} className="flex h-[22px] w-[22px] items-center justify-center border border-[#adadad] bg-[#e1e1e1]">
      <Svg w={9} h={10}>
        {dir === "up" ? <path d="M4.500 0L9 5H6V10H3V5H0Z" /> : <path d="M4.500 10L9 5H6V0H3V5H0Z" />}
      </Svg>
    </button>
  );
}

function CollectionEditor() {
  const [selected, setSelected] = useState(2);
  const btn = "h-[21px] border border-[#adadad] bg-[#e1e1e1] text-[11px] leading-[19px]";
  return (
    <div role="dialog" aria-label="GraphSeries Collection Editor" className="absolute top-[145px] left-[706px] flex h-[757px] w-[792px] flex-col border border-[#1883d7] bg-[#f0f0f0] text-[11px] shadow-[0_4px_16px_rgba(0,0,0,0.4)]">
      <div className="flex h-[30px] shrink-0 items-center justify-between bg-white pl-2">
        <h2 className="text-[11px]">GraphSeries Collection Editor</h2>
        <div className="flex">
          <button aria-label="Help" className="w-[45px] text-[13px] font-semibold">?</button>
          <button aria-label="Close dialog" className="flex w-[45px] items-center justify-center">
            <Svg w={11} h={11}><path d="M0.500 0.500L10.500 10.500M10.500 0.500L0.500 10.500" stroke="#000" strokeWidth="1.100" /></Svg>
          </button>
        </div>
      </div>
      <div className="flex min-h-0 flex-1 pt-[10px] pr-3 pl-3">
        <div className="flex w-[186px] flex-col pb-1">
          <h3 className="mb-1 h-[18px] pl-[3px] leading-[18px]">Members:</h3>
          <ul className="flex-1 border border-[#828790] bg-white p-px">
            {["lineSeries1", "lineSeries2", "barSeries1"].map((m, i) => (
              <li key={m}>
                <button onClick={() => setSelected(i)} className="flex h-[17px] w-full text-left leading-[14px]">
                  <span className="w-[15px] border-r border-b border-[#888] bg-[#f0f0f0] text-center">{i}</span>
                  <span className={`flex-1 pl-1 ${selected === i ? "bg-[#0078d7] text-white outline-1 -outline-offset-1 outline-dotted outline-[#052a4a]" : ""}`}>{m}</span>
                </button>
              </li>
            ))}
          </ul>
          <div className="mt-[11px] flex gap-2 pl-px">
            <button className={`${btn} flex flex-1 items-center`}>
              <span className="flex-1">Add</span>
              <span className="flex h-full w-[13px] items-center justify-center border-l border-white"><Caret /></span>
            </button>
            <button className={`${btn} flex-1`}>Remove</button>
          </div>
        </div>
        <div className="ml-[7px] flex w-[22px] flex-col gap-[6px] pt-[23px]">
          <ArrowButton dir="up" />
          <ArrowButton dir="down" />
        </div>
        <div className="relative ml-[22px] flex min-w-0 flex-1 flex-col">
          <h3 className="mb-[5px] h-[18px] leading-[18px]">barSeries1 properties:</h3>
          <div className="mb-0.5 flex h-[23px] items-center pl-0.5">
            <button aria-label="Categorized" className="flex h-[22px] w-[23px] items-center justify-center border border-[#90c8f6] bg-[#c5dff5]">
              <Svg w={17} h={17}>
                <rect x="1.500" y="1.500" width="5" height="5" fill="#fff" stroke="#5a7bb0" /><path d="M2 4H6M4 2V6" stroke="#000" />
                <rect x="1.500" y="10.500" width="5" height="5" fill="#fff" stroke="#5a7bb0" /><path d="M2 13H6M4 11V15" stroke="#000" />
                <path d="M9 3.500H12M9 6.500H12M9 9.500H12M9 12.500H12M9 15.500H12M13 3.500H16M13 6.500H16M13 9.500H16M13 12.500H16" stroke="#667" />
              </Svg>
            </button>
            <button aria-label="Alphabetical" className="ml-[3px]">
              <Svg w={16} h={18}>
                <text x="0" y="8" fontSize="10" fontWeight="700" fill="#2a50a8" fontFamily="Liberation Serif, serif">A</text>
                <text x="0" y="17" fontSize="10" fontWeight="700" fill="#9c2b2b" fontFamily="Liberation Serif, serif">Z</text>
                <path d="M12.500 1V14" stroke="#000" strokeWidth="1.300" /><path d="M9.500 12.500H15.500L12.500 17Z" />
              </Svg>
            </button>
            <span className="ml-[5px] h-[21px] w-px bg-[#999]" />
            <button aria-label="Property pages" className="ml-[7px]" disabled>
              <Svg w={16} h={15}><rect x="0.500" y="0.500" width="15" height="14" fill="#e4e4e4" stroke="#a0a0a0" /><rect x="1" y="1" width="14" height="3" fill="#a8a8a8" /><path d="M3.500 6.500H12.500V12.500H3.500ZM5 8.500H6M7 8.500H11M5 10.500H6M7 10.500H11" fill="none" stroke="#a8a8a8" /></Svg>
            </button>
          </div>
          <div className="flex-1 overflow-hidden border border-[#9c9c9c] bg-white">
            <PropertyTable rows={seriesProps} nameWidth="w-[232px]" label="barSeries1 properties" />
          </div>
          {/* highlighter strokes over the edited values */}
          <svg width="160" height="145" viewBox="1204 277 160 145" aria-hidden="true" className="pointer-events-none absolute top-[91px] left-[248px] mix-blend-multiply">
            <g fill="#ffff00">
              <path d="M1213 279H1257L1262 282L1292 283L1317 287L1327 288H1358V303L1314 304V307H1246V305H1206V289H1213Z" />
              <path d="M1213 319L1235 320L1242 321L1294 322L1317 318H1329V338L1317 342H1349V358L1339 360L1297 359L1275 357H1240L1237 359H1207V343L1213 340Z" />
              <path d="M1205 396L1215 394L1260 392H1297L1311 395L1314 396V416L1294 419H1217V412H1205Z" />
            </g>
          </svg>
        </div>
      </div>
      <div className="relative flex shrink-0 justify-end gap-2 pt-[10px] pr-[13px] pb-[13px]">
        <button className="h-[21px] w-[76px] border-2 border-[#0078d7] bg-[#e1e1e1] leading-[17px]">OK</button>
        <button className={`${btn} w-[76px]`}>Cancel</button>
        <svg width="9" height="9" viewBox="0 0 9 9" aria-hidden="true" className="absolute right-0.5 bottom-0.5">
          <path d="M6 0H8V2H6ZM3 3H5V5H3ZM6 3H8V5H6ZM0 6H2V8H0ZM3 6H5V8H3ZM6 6H8V8H6Z" fill="#bfbfbf" />
        </svg>
      </div>
    </div>
  );
}

export default function App() {
  return (
    <div className="relative flex h-screen flex-col overflow-hidden bg-white font-['Open_Sans',sans-serif] text-black">
      <TitleArea />
      <Ribbon />
      <div className="flex min-h-0 flex-1">
        <main className="flex min-w-0 flex-1 flex-col pt-0.5 pb-px pl-px">
          <div className="flex h-[25px] w-[202px] shrink-0 items-center justify-between bg-[#3259a3] pr-[9px] pl-[5px] text-[11px] text-white">
            <span>ChartWith2LInes.trdp [Design]*</span>
            <button aria-label="Close document">
              <Svg w={10} h={10}><path d="M1 1L9 9M9 1L1 9" stroke="#cfd9ee" strokeWidth="2" /></Svg>
            </button>
          </div>
          <DesignerFrame />
          <GroupExplorer />
        </main>
        <RightColumn />
      </div>
      <div className="flex h-1 shrink-0 bg-[#05080f]" aria-hidden="true">
        <span className="ml-12 w-[344px] bg-[#e8eaec]" />
        <span className="ml-[443px] w-12 bg-[#3c4046]" />
      </div>
      <CollectionEditor />
    </div>
  );
}
